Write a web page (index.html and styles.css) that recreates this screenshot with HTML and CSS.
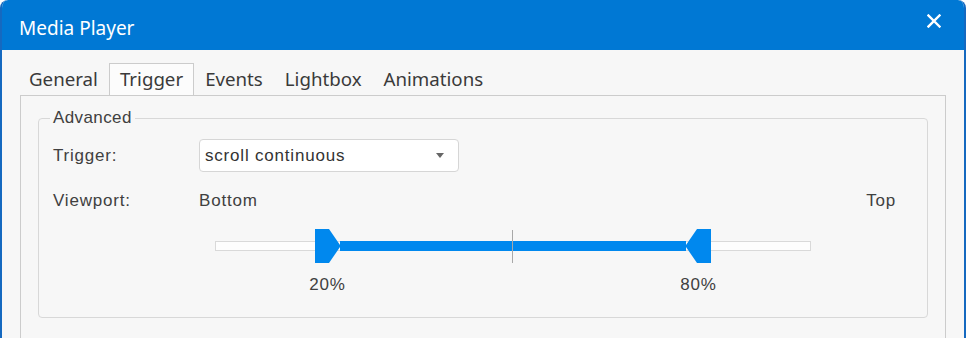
FILE: index.html
```html
<!DOCTYPE html>
<html lang="en">
<head>
    <meta charset="UTF-8">
    <meta name="viewport" content="width=device-width, initial-scale=1.0">
    <title>Media Player</title>
    <link rel="stylesheet" href="styles.css">
</head>
<body>

    <div class="window">
        <div class="titlebar">
            <span class="title">Media Player</span>
            <svg class="close" width="14" height="14" viewBox="0 0 14 14">
                <path d="M1.5 1.5 L12.5 12.5 M12.5 1.5 L1.5 12.5" stroke="#fff" stroke-width="2.4" stroke-linecap="square"/>
            </svg>
        </div>

        <div class="tabs">
            <span class="tab">General</span>
            <span class="tab active">Trigger</span>
            <span class="tab">Events</span>
            <span class="tab">Lightbox</span>
            <span class="tab">Animations</span>
        </div>

        <div class="panel">
            <fieldset class="group">
                <legend>Advanced</legend>

                <div class="row">
                    <span class="label">Trigger:</span>
                    <div class="select">
                        <span>scroll continuous</span>
                        <span class="arrow"></span>
                    </div>
                </div>

                <div class="row viewport">
                    <span class="label">Viewport:</span>
                    <span class="grow">Bottom</span>
                    <span>Top</span>
                </div>

                <div class="slider">
                    <div class="track"></div>
                    <div class="range"></div>
                    <div class="tick"></div>
                    <div class="thumb thumb-left">
                        <svg width="25" height="34" viewBox="0 0 25 34">
                            <polygon points="0,0 14,0 25,16 25,18 14,34 0,34" fill="#0088ee"/>
                        </svg>
                        <span class="value">20%</span>
                    </div>
                    <div class="thumb thumb-right">
                        <svg width="25" height="34" viewBox="0 0 25 34">
                            <polygon points="11,0 25,0 25,34 11,34 0,18 0,16" fill="#0088ee"/>
                        </svg>
                        <span class="value">80%</span>
                    </div>
                </div>
            </fieldset>
        </div>
    </div>

</body>
</html>
```

FILE: styles.css
```css
body {
    margin: 0;
    background-color: #ffffff;
    font-family: "Liberation Sans", Arial, sans-serif;
}
.window {
    height: 338px;
    box-sizing: border-box;
    border: 2px solid #1569c0;
    border-top: none;
    border-bottom: none;
    border-radius: 8px 8px 0 0;
    background-color: #f7f7f7;
    overflow: hidden;
}
.titlebar {
    height: 50px;
    margin: 0 -2px;
    padding: 6px 25px 0 19px;
    box-sizing: border-box;
    background-color: #0078d4;
    display: flex;
    align-items: center;
    justify-content: space-between;
    border-radius: 8px 8px 0 0;
}
.title {
    font-family: "Noto Sans", sans-serif;
    font-size: 19px;
    color: #ffffff;
}
.close {
    margin-top: -14px;
}
.tabs {
    display: flex;
    padding: 13px 0 0 16px;
    font-family: "Noto Sans", sans-serif;
    font-size: 18.7px;
    color: #3a3a3a;
}
.tab {
    height: 31px;
    padding: 0 10px;
    line-height: 30px;
    border: 1px solid transparent;
    border-bottom: none;
}
.tab.active {
    background-color: #fcfcfc;
    border-color: #cccccc;
    margin-bottom: -1px;
    position: relative;
}
.panel {
    margin: 0 18px;
    height: 300px;
    border: 1px solid #cccccc;
    border-bottom: none;
    padding: 13px 17px 0 17px;
}
.group {
    margin: 0;
    padding: 0 31px 23px 14px;
    border: 1px solid #d8d8d8;
    border-radius: 4px;
    font-size: 17px;
    letter-spacing: 0.8px;
    color: #404040;
}
.group legend {
    padding: 0 3px;
    margin-left: -3px;
    line-height: 18px;
    letter-spacing: 0.4px;
}
.row {
    display: flex;
    align-items: center;
    margin-top: 12px;
}
.label {
    width: 146px;
}
.select {
    width: 260px;
    height: 33px;
    box-sizing: border-box;
    border: 1px solid #d6d6d6;
    border-radius: 4px;
    background-color: #ffffff;
    display: flex;
    align-items: center;
    justify-content: space-between;
    padding: 0 14px 0 5px;
    color: #333333;
}
.arrow {
    width: 0;
    height: 0;
    border-left: 4px solid transparent;
    border-right: 4px solid transparent;
    border-top: 5px solid #666666;
}
.viewport {
    margin-top: 20px;
    line-height: 18px;
}
.grow {
    flex: 1;
}
.slider {
    position: relative;
    width: 596px;
    height: 65px;
    margin: 19px 0 0 162px;
}
.track {
    position: absolute;
    left: 0;
    right: 0;
    top: 12px;
    height: 10px;
    box-sizing: border-box;
    border: 1px solid #d9d9d9;
    background-color: #fdfdfd;
}
.range {
    position: absolute;
    left: 125px;
    width: 346px;
    top: 12px;
    height: 10px;
    background-color: #0088ee;
}
.tick {
    position: absolute;
    left: 297px;
    top: 1px;
    width: 1px;
    height: 33px;
    background-color: #a8a8a8;
}
.thumb {
    position: absolute;
    top: 0;
    width: 25px;
    display: flex;
    flex-direction: column;
    align-items: center;
}
.thumb svg {
    display: block;
}
.thumb-left {
    left: 100px;
}
.thumb-right {
    left: 471px;
}
.value {
    margin-top: 13px;
    white-space: nowrap;
    line-height: 18px;
}
```
